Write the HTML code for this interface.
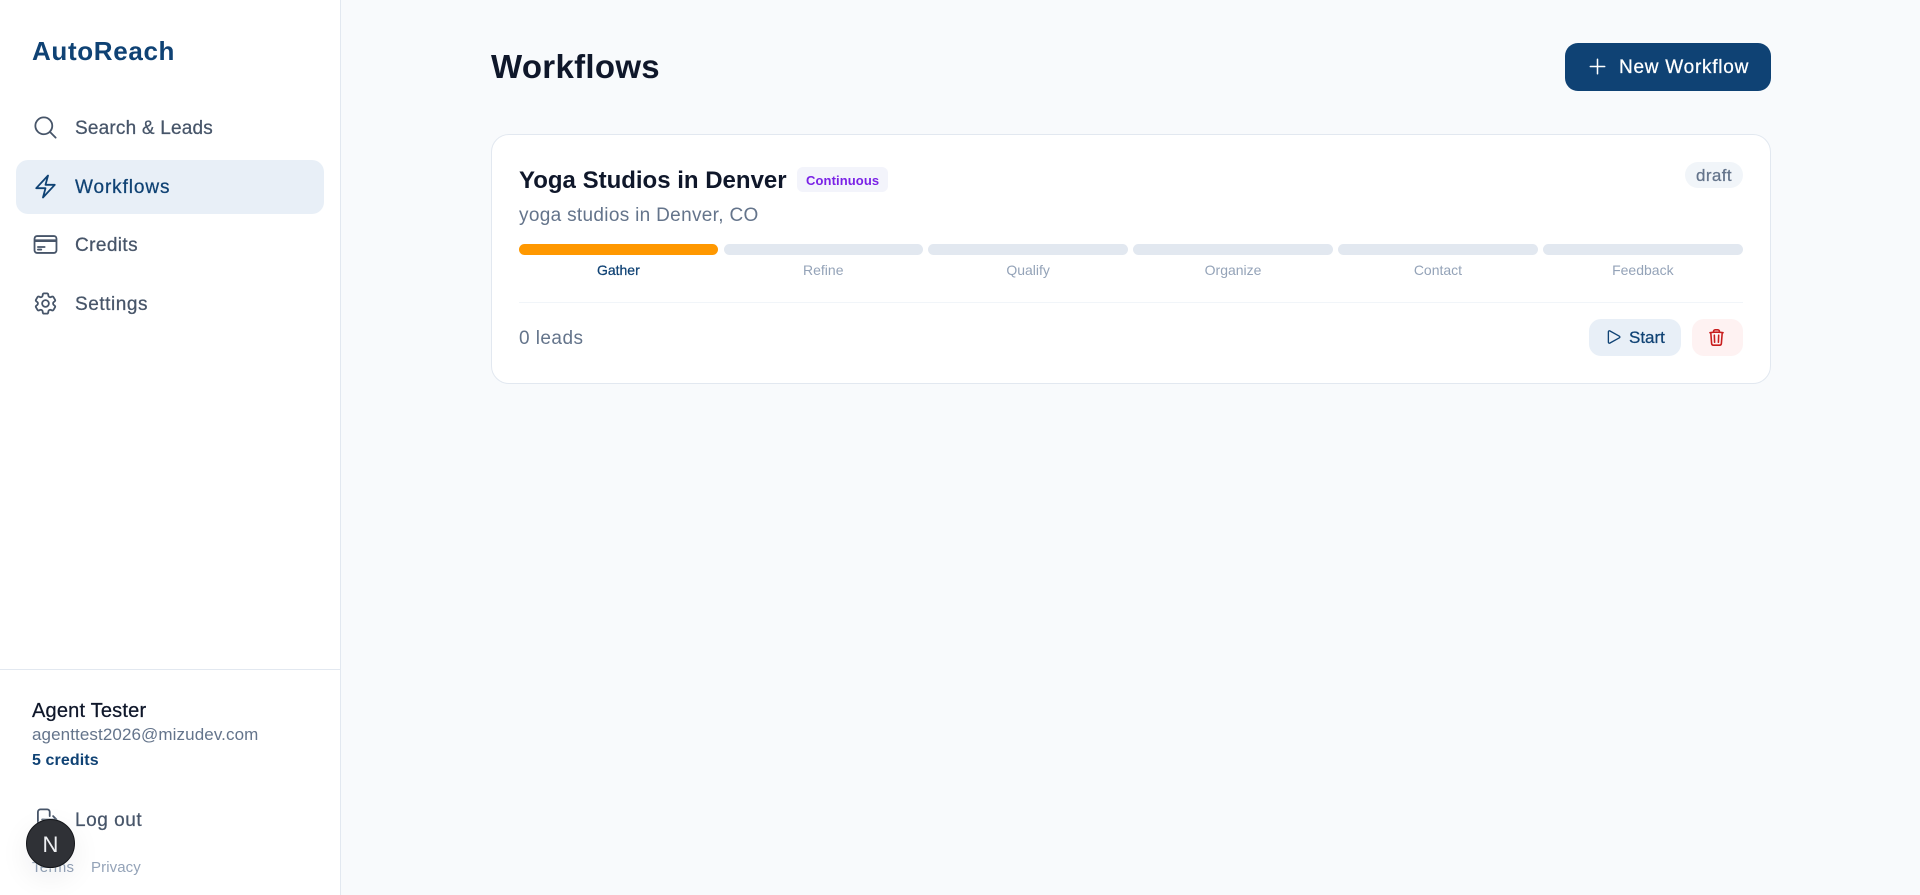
<!DOCTYPE html>
<html lang="en">
<head>
<meta charset="utf-8">
<title>AutoReach - Workflows</title>
<style>
html,body{margin:0;padding:0;width:1920px;height:895px;overflow:hidden;background:#f8fafc;font-family:"Liberation Sans",Arial,sans-serif}
.abs,.t,svg.i{position:absolute}
.t{line-height:0;white-space:nowrap}
.m{-webkit-text-stroke:.25px currentColor}
.c{text-align:center;width:199.5px}
svg.i{fill:none;stroke:currentColor;stroke-width:1.6;stroke-linecap:round;stroke-linejoin:round}
.seg{position:absolute;top:244px;height:11px;width:199.5px;border-radius:6px;background:#e2e8f0}
</style>
</head>
<body>
<div class="abs" style="left:0;top:0;width:340px;height:895px;background:#fff;border-right:1px solid #e2e8f0"></div>
<div class="t" style="left:32px;top:51px;font-size:26px;font-weight:700;letter-spacing:.65px;color:#0f4274">AutoReach</div>

<div class="abs" style="left:16px;top:160px;width:308px;height:54px;border-radius:12px;background:#e8eff7"></div>

<svg class="i" style="left:32px;top:114px;color:#475569" width="27" height="27" viewBox="0 0 24 24"><path d="m21 21-5.197-5.197m0 0A7.5 7.5 0 1 0 5.196 5.196a7.5 7.5 0 0 0 10.607 10.607Z"/></svg>
<div class="t m" style="left:75px;top:129px;font-size:19px;letter-spacing:.2px;color:#475569">Search &amp; Leads</div>

<svg class="i" style="left:32px;top:173px;color:#0f4274" width="27" height="27" viewBox="0 0 24 24"><path d="m3.75 13.5 10.5-11.25L12 10.5h8.25L9.75 21.75 12 13.5H3.75Z"/></svg>
<div class="t m" style="left:75px;top:188px;font-size:19px;letter-spacing:.9px;color:#0f4274">Workflows</div>

<svg class="i" style="left:32px;top:231px;color:#475569" width="27" height="27" viewBox="0 0 24 24"><path d="M2.25 8.25h19.5M2.25 9h19.5m-16.5 5.25h6m-6 2.25h3m-3.75 3h15a2.25 2.25 0 0 0 2.25-2.25V6.75A2.25 2.25 0 0 0 19.5 4.5h-15a2.25 2.25 0 0 0-2.25 2.25v10.5A2.25 2.25 0 0 0 4.5 19.5Z"/></svg>
<div class="t m" style="left:75px;top:246px;font-size:19px;letter-spacing:.4px;color:#475569">Credits</div>

<svg class="i" style="left:32px;top:290px;color:#475569" width="27" height="27" viewBox="0 0 24 24"><path d="M9.594 3.94c.09-.542.56-.94 1.11-.94h2.593c.55 0 1.02.398 1.11.94l.213 1.281c.063.374.313.686.645.87.074.04.147.083.22.127.325.196.72.257 1.075.124l1.217-.456a1.125 1.125 0 0 1 1.37.49l1.296 2.247a1.125 1.125 0 0 1-.26 1.431l-1.003.827c-.293.241-.438.613-.43.992a7.723 7.723 0 0 1 0 .255c-.008.378.137.75.43.991l1.004.827c.424.35.534.955.26 1.43l-1.298 2.247a1.125 1.125 0 0 1-1.369.491l-1.217-.456c-.355-.133-.75-.072-1.076.124a6.47 6.47 0 0 1-.22.128c-.331.183-.581.495-.644.869l-.213 1.281c-.09.543-.56.94-1.11.94h-2.594c-.55 0-1.019-.398-1.11-.94l-.213-1.281c-.062-.374-.312-.686-.644-.87a6.52 6.52 0 0 1-.22-.127c-.325-.196-.72-.257-1.076-.124l-1.217.456a1.125 1.125 0 0 1-1.369-.49l-1.297-2.247a1.125 1.125 0 0 1 .26-1.431l1.004-.827c.292-.24.437-.613.43-.991a6.932 6.932 0 0 1 0-.255c.007-.38-.138-.751-.43-.992l-1.004-.827a1.125 1.125 0 0 1-.26-1.43l1.297-2.247a1.125 1.125 0 0 1 1.37-.491l1.216.456c.356.133.751.072 1.076-.124.072-.044.146-.086.22-.128.332-.183.582-.495.644-.869l.214-1.28Z"/><path d="M15 12a3 3 0 1 1-6 0 3 3 0 0 1 6 0Z"/></svg>
<div class="t m" style="left:75px;top:305px;font-size:19px;letter-spacing:.55px;color:#475569">Settings</div>

<div class="abs" style="left:0;top:669px;width:340px;height:1px;background:#e2e8f0"></div>
<div class="t m" style="left:32px;top:711px;font-size:20px;letter-spacing:.2px;color:#0f172a">Agent Tester</div>
<div class="t" style="left:32px;top:735px;font-size:17px;letter-spacing:.1px;color:#64748b">agenttest2026@mizudev.com</div>
<div class="t" style="left:32px;top:761px;font-size:16px;font-weight:700;letter-spacing:.1px;color:#0f4274">5 credits</div>

<svg class="i" style="left:32px;top:806px;color:#475569" width="27" height="27" viewBox="0 0 24 24"><path d="M15.75 9V5.25A2.25 2.25 0 0 0 13.5 3h-6a2.25 2.25 0 0 0-2.25 2.25v13.5A2.25 2.25 0 0 0 7.5 21h6a2.25 2.25 0 0 0 2.25-2.25V15m3 0 3-3m0 0-3-3m3 3H9"/></svg>
<div class="t m" style="left:75px;top:821px;font-size:19px;letter-spacing:.55px;color:#475569">Log out</div>
<div class="t" style="left:32px;top:868px;font-size:15px;letter-spacing:.3px;color:#94a3b8">Terms</div>
<div class="t" style="left:91px;top:868px;font-size:15px;letter-spacing:.1px;color:#94a3b8">Privacy</div>

<div class="abs" style="left:26px;top:819px;width:47px;height:47px;border:1.5px solid #14161a;border-radius:50%;background:#2f3136;box-shadow:0 0 0 1px rgba(255,255,255,.25),0 10px 30px rgba(15,23,42,.07)"></div>
<div class="t" style="left:42.5px;top:845px;font-size:22px;color:#eef0f3">N</div>

<div class="t" style="left:491px;top:67px;font-size:33px;font-weight:700;letter-spacing:.3px;color:#0f172a">Workflows</div>

<div class="abs" style="left:1565px;top:43px;width:206px;height:48px;border-radius:13px;background:#0f4274"></div>
<svg class="i" style="left:1586px;top:55px;color:#fff" width="23" height="23" viewBox="0 0 24 24"><path d="M12 4.5v15m7.5-7.5h-15"/></svg>
<div class="t m" style="left:1619px;top:68px;font-size:19px;letter-spacing:.75px;color:#fff">New Workflow</div>

<div class="abs" style="left:491px;top:134px;width:1278px;height:248px;border:1px solid #e2e8f0;border-radius:18px;background:#fff"></div>

<div class="t" style="left:519px;top:181px;font-size:24px;font-weight:700;letter-spacing:0;color:#0f172a">Yoga Studios in Denver</div>
<div class="abs" style="left:797px;top:167px;width:91px;height:25px;border-radius:6px;background:#f3f4fb"></div>
<div class="t" style="left:806px;top:181px;font-size:13px;font-weight:700;letter-spacing:.1px;color:#7a22e6">Continuous</div>
<div class="abs" style="left:1685px;top:162px;width:58px;height:26px;border-radius:13px;background:#f1f5f9"></div>
<div class="t m" style="left:1696px;top:175.5px;font-size:17px;letter-spacing:.4px;color:#64748b">draft</div>

<div class="t" style="left:519px;top:216px;font-size:19px;letter-spacing:.32px;color:#64748b">yoga studios in Denver, CO</div>

<div class="seg" style="left:518.6px;background:#ff9800"></div>
<div class="seg" style="left:723.5px"></div>
<div class="seg" style="left:928.4px"></div>
<div class="seg" style="left:1133.3px"></div>
<div class="seg" style="left:1338.2px"></div>
<div class="seg" style="left:1543.1px"></div>

<div class="t c m" style="left:518.6px;top:270px;font-size:14px;color:#0f4274">Gather</div>
<div class="t c" style="left:723.5px;top:270px;font-size:14px;color:#94a3b8">Refine</div>
<div class="t c" style="left:928.4px;top:270px;font-size:14px;color:#94a3b8">Qualify</div>
<div class="t c" style="left:1133.3px;top:270px;font-size:14px;color:#94a3b8">Organize</div>
<div class="t c" style="left:1338.2px;top:270px;font-size:14px;color:#94a3b8">Contact</div>
<div class="t c" style="left:1543.1px;top:270px;font-size:14px;color:#94a3b8">Feedback</div>

<div class="abs" style="left:519px;top:302px;width:1224px;height:1px;background:#f1f5f9"></div>

<div class="t" style="left:519px;top:339px;font-size:19px;letter-spacing:.45px;color:#64748b">0 leads</div>

<div class="abs" style="left:1589px;top:319px;width:92px;height:37px;border-radius:12px;background:#e8eff7"></div>
<svg class="i" style="left:1604px;top:327px;color:#0f4274" width="20" height="20" viewBox="0 0 24 24"><path d="M5.25 5.653c0-.856.917-1.398 1.667-.986l11.54 6.347a1.125 1.125 0 0 1 0 1.972l-11.54 6.347a1.125 1.125 0 0 1-1.667-.986V5.653Z"/></svg>
<div class="t m" style="left:1629px;top:338px;font-size:17px;color:#0f4274">Start</div>

<div class="abs" style="left:1692px;top:319px;width:51px;height:37px;border-radius:12px;background:#fef2f2"></div>
<svg class="i" style="left:1707px;top:328px;color:#c81e1e;stroke-width:2" width="19" height="19" viewBox="0 0 24 24"><path d="m14.74 9-.346 9m-4.788 0L9.26 9m9.968-3.21c.342.052.682.107 1.022.166m-1.022-.165L18.16 19.673a2.25 2.25 0 0 1-2.244 2.077H8.084a2.25 2.25 0 0 1-2.244-2.077L4.772 5.79m14.456 0a48.108 48.108 0 0 0-3.478-.397m-12 .562c.34-.059.68-.114 1.022-.165m0 0a48.11 48.11 0 0 1 3.478-.397m7.5 0v-.916c0-1.18-.91-2.164-2.09-2.201a51.964 51.964 0 0 0-3.32 0c-1.18.037-2.09 1.022-2.09 2.201v.916m7.5 0a48.667 48.667 0 0 0-7.5 0"/></svg>
</body>
</html>
